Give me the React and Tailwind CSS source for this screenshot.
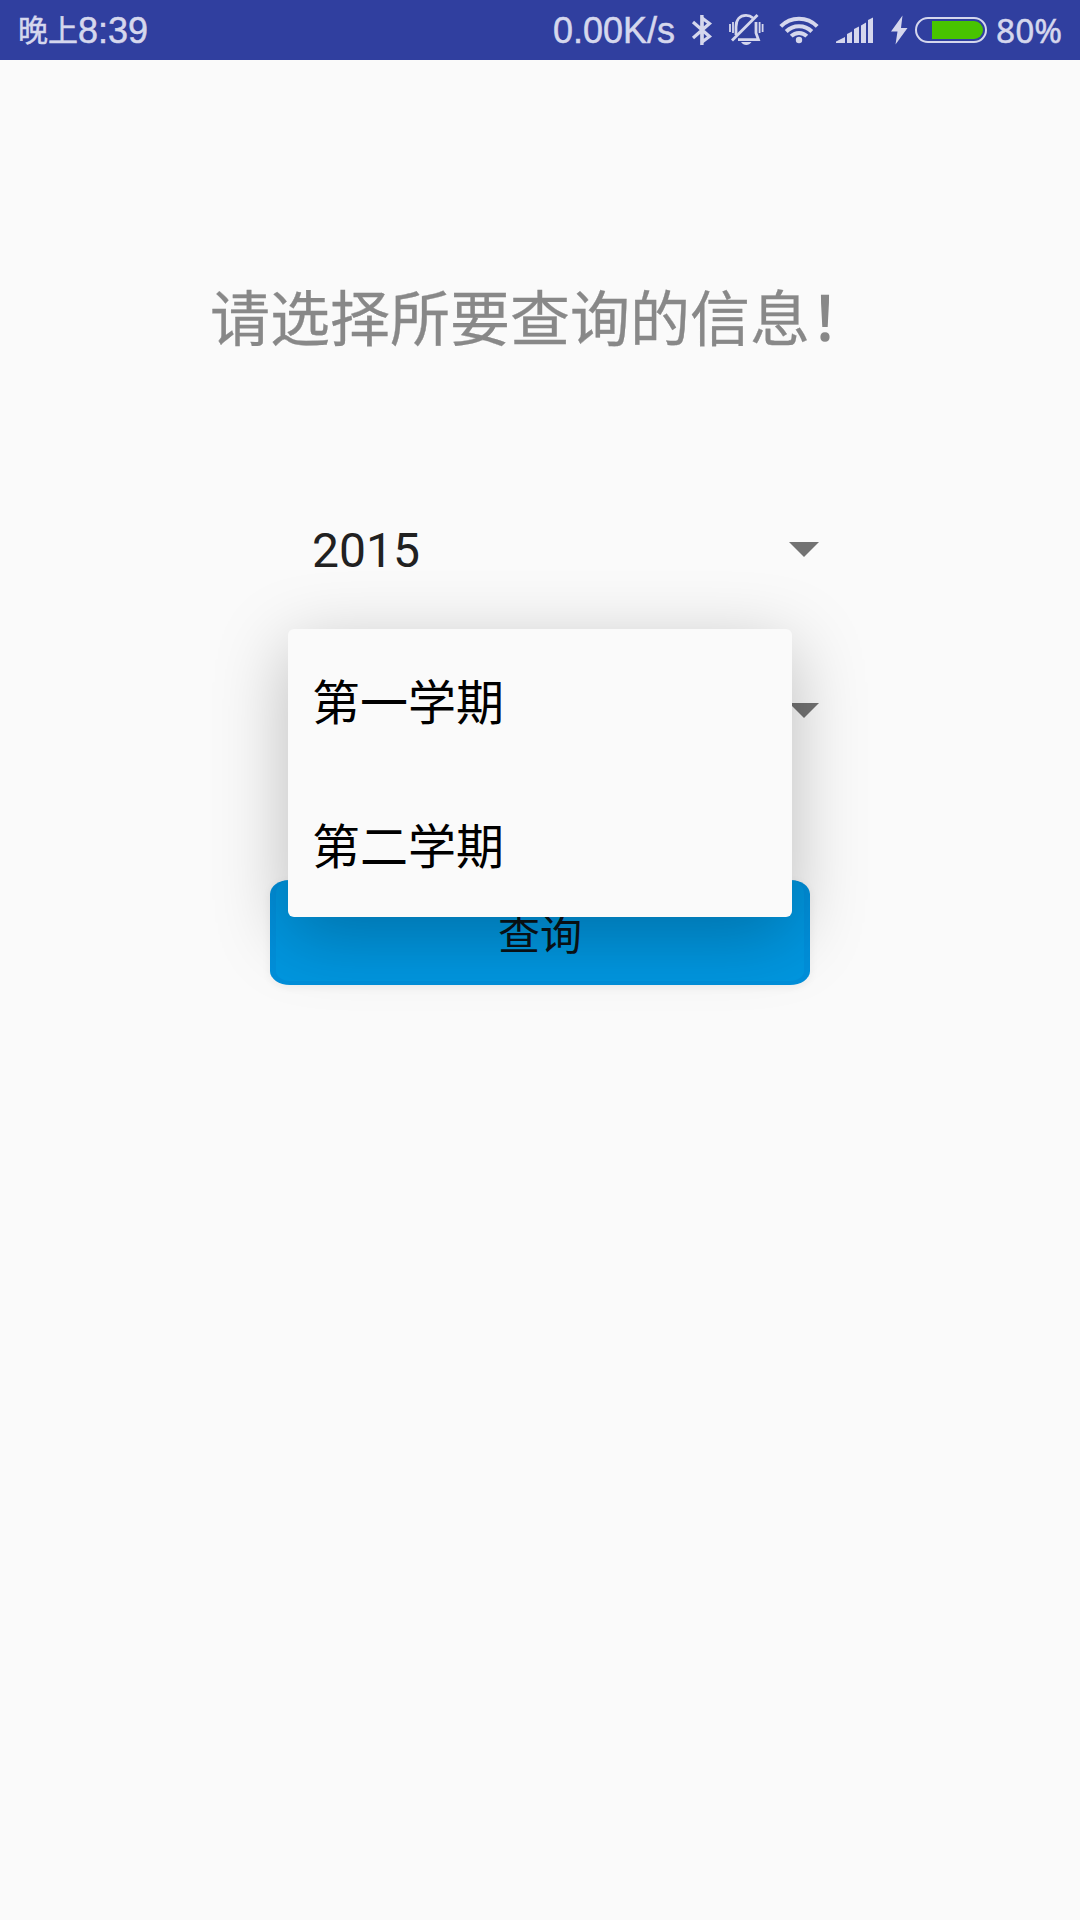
const cjk = "font-['Roboto','Noto_Sans_CJK_SC',sans-serif]";

function Bluetooth() {
  return (
    <svg className="h-[60px] w-[30px] shrink-0" viewBox="688 0 30 60" fill="none" stroke="#d5d7ed" strokeWidth="3.2">
      <path d="M693 22 L709.5 36.5 L702 42 V18 L709.5 23.5 L693 38" />
      <path d="M702 15 V45" />
    </svg>
  );
}

function BellOff() {
  return (
    <svg className="h-[60px] w-[36px] shrink-0" viewBox="728 0 36 60" fill="none" stroke="#d5d7ed" strokeWidth="2.8">
      <path d="M736 35 V27 C736 19.5 740 15.4 746 15.4 C749 15.4 751 16.2 753 18" />
      <path d="M756 22 V33 L758.4 39.6 H738" />
      <path d="M757.5 15 L732 40.5" />
      <path d="M741 42 H751.5 C749 46 743.5 46 741 42Z" fill="#d5d7ed" stroke="none" />
      <path d="M730 24 V32 M733 22 V33 M759.6 22 V33 M762.6 24 V32" strokeWidth="1.8" />
    </svg>
  );
}

function Wifi() {
  return (
    <svg className="h-[60px] w-[40px] shrink-0" viewBox="779 0 40 60" fill="none" stroke="#d5d7ed" strokeWidth="4">
      <path d="M780.8 26.3 A25.5 25.5 0 0 1 817.2 26.3" />
      <path d="M786.2 31.5 A18 18 0 0 1 811.8 31.5" />
      <path d="M791.2 36.2 A11 11 0 0 1 806.8 36.2" />
      <circle cx="799" cy="40" r="3.2" fill="#d5d7ed" stroke="none" />
    </svg>
  );
}

function Signal() {
  return (
    <svg className="h-[60px] w-[38px] shrink-0" viewBox="836 0 38 60" fill="#d5d7ed">
      <path d="M836 43 V41.5 L845 37 V43Z M847 43 V34 L852 31.5 V43Z M854 43 V29 L859 26.5 V43Z M861 43 V25.5 L866 22.5 V43Z M868 43 V20 L873 17.5 V43Z" />
    </svg>
  );
}

function Battery() {
  return (
    <svg className="h-[60px] w-[98px] shrink-0" viewBox="890 0 98 60">
      <path d="M902.5 15.5 L891 31.5 H897.5 L895.5 44.5 L907.5 28 H901Z" fill="#d5d7ed" />
      <rect x="916" y="18" width="70" height="24" rx="12" fill="none" stroke="#d5d7ed" strokeWidth="2" />
      <path d="M932 21 H974 A9 9 0 0 1 974 39 H932Z" fill="#48c400" />
    </svg>
  );
}

function StatusBar() {
  return (
    <header className="flex h-[60px] items-center bg-[#303f9f] leading-[60px] text-[#d5d7ed] [-webkit-text-stroke:0.5px_#d5d7ed]">
      <div className="ml-[18px] flex h-[60px] items-center">
        <span className="pb-1 font-['Noto_Sans_CJK_SC',sans-serif] text-[30px]">晚上</span>
        <span className="pt-0.5 font-['Liberation_Sans',sans-serif] text-[36px]">8:39</span>
      </div>
      <div className="ml-auto flex h-[60px] items-center">
        <span className="mr-[13px] pt-0.5 font-['Liberation_Sans',sans-serif] text-[36px]">0.00K/s</span>
        <Bluetooth />
        <div className="w-[10px]" />
        <BellOff />
        <div className="w-[15px]" />
        <Wifi />
        <div className="w-[17px]" />
        <Signal />
        <div className="w-[16px]" />
        <Battery />
        <span className="ml-2 w-[84px] font-['Noto_Sans',sans-serif] text-[33.5px]">80%</span>
      </div>
    </header>
  );
}

function Spinner({ value }) {
  return (
    <div className="ml-[288px] flex h-[72px] w-[552px] items-center pr-[21px] pl-6">
      <span className="pt-0.5 text-[48px] leading-[72px] text-[#212121]">{value}</span>
      <svg className="mb-0.5 ml-auto h-[15px] w-[30px]" viewBox="0 0 30 15">
        <path d="M0 0 H30 L15 15Z" fill="#737373" />
      </svg>
    </div>
  );
}

function Menu({ items }) {
  return (
    <ul className="absolute top-[629px] left-[288px] w-[504px] rounded-[6px] bg-[#fafafa] shadow-[0_18px_72px_rgba(0,0,0,0.25)]">
      {items.map((item) => (
        <li key={item} className="flex h-36 items-center pt-[5px] pl-6 text-[48px] leading-[72px] text-black">
          {item}
        </li>
      ))}
    </ul>
  );
}

export default function App() {
  return (
    <div className={`relative h-[1920px] w-[1080px] overflow-hidden bg-[#fafafa] ${cjk}`}>
      <StatusBar />
      <main className="flex flex-col">
        <h1 className="mt-[216px] text-center text-[60px] leading-[90px] text-[#888888] [-webkit-text-stroke:0.3px_#888888]">
          请选择所要查询的信息<span className="[-webkit-text-stroke:1.5px_#888888]">！</span>
        </h1>
        <div className="mt-[148px]">
          <Spinner value="2015" />
        </div>
        <div className="mt-[89px]">
          <Spinner value="" />
        </div>
        <button className="mx-auto mt-[133px] h-[105px] w-[540px] rounded-[20px/14px] border-x-[6px] border-b-4 border-[#008fda] bg-[#0096df] pt-[9px] text-[42px] text-[#0a1217] shadow-[0_2px_10px_rgba(0,0,0,0.06)]">
          查询
        </button>
      </main>
      <Menu items={["第一学期", "第二学期"]} />
    </div>
  );
}
